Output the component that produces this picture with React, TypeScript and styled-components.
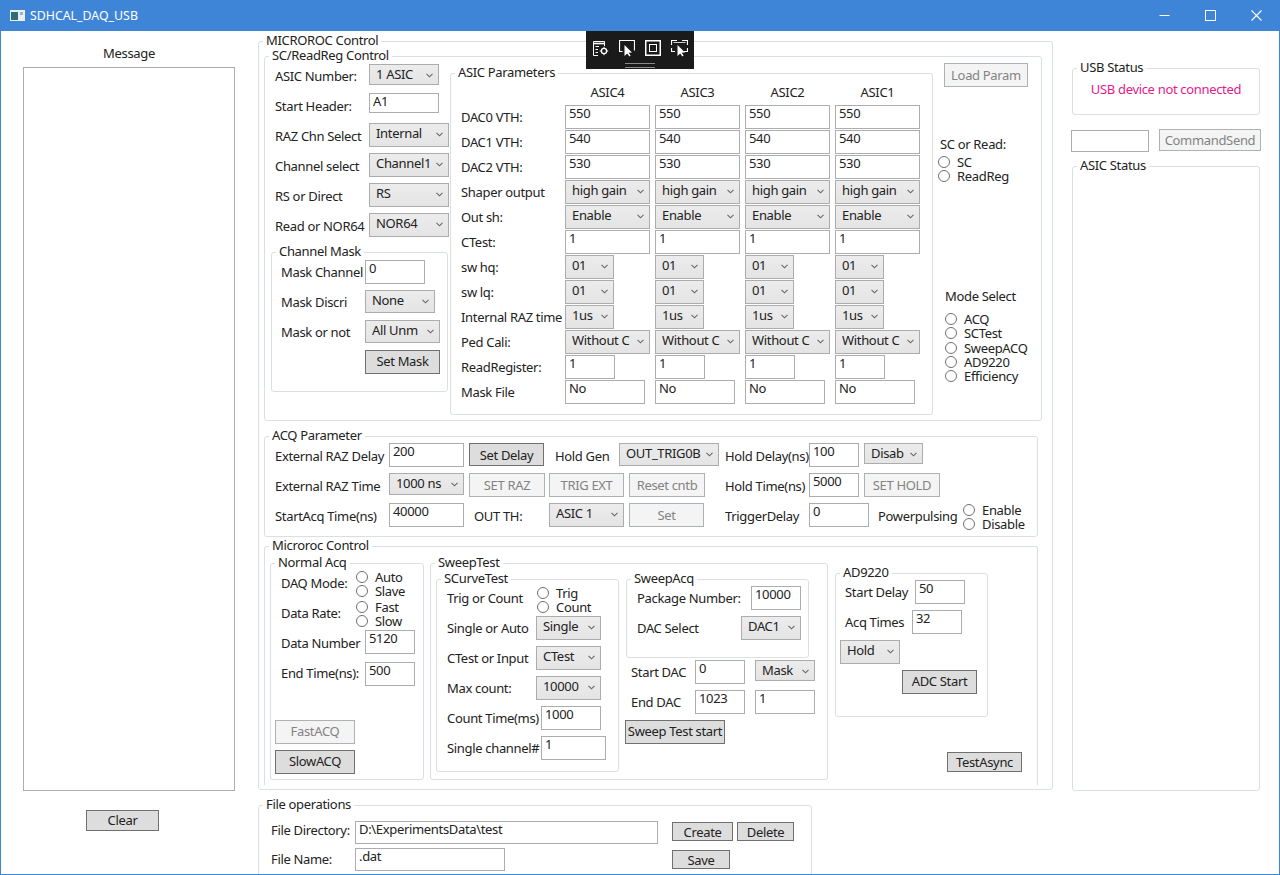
import React from 'react';
import styled, { createGlobalStyle } from 'styled-components';

const GlobalStyle = createGlobalStyle`
  html, body {
    margin: 0;
    padding: 0;
    background: #ffffff;
  }
  body {
    font-family: "Noto Sans", "Open Sans", sans-serif;
    font-size: 13px;
    letter-spacing: -0.33px;
    color: #222222;
  }
`;

const Window = styled.div`
  width: 1280px;
  height: 875px;
  box-sizing: border-box;
  border: 1px solid #3f85d7;
  border-top: 0;
  position: relative;
  overflow: hidden;
  background: #ffffff;
`;

const TitleBar = styled.div`
  height: 31px;
  background: #3f85d7;
  color: #ffffff;
  display: flex;
  align-items: center;
`;

const TitleText = styled.span`
  margin-left: 5px;
  font-size: 12.35px;
  letter-spacing: 0;
  flex: 1;
`;

const WinButton = styled.div`
  width: 46px;
  height: 31px;
  display: flex;
  align-items: center;
  justify-content: center;
`;

const Main = styled.div`
  display: flex;
  height: 843px;
  overflow: hidden;
`;

const LeftPanel = styled.div`
  width: 257px;
  flex: none;
  box-sizing: border-box;
  padding: 13px 0 0 22px;
`;

const MessageTitle = styled.div`
  width: 212px;
  line-height: 18px;
  text-align: center;
  margin-bottom: 5px;
`;

const MessageBox = styled.textarea`
  display: block;
  width: 212px;
  height: 724px;
  box-sizing: border-box;
  border: 1px solid #abadb3;
  resize: none;
  outline: none;
  margin: 0 0 19px;
`;

const CenterPanel = styled.div`
  width: 813px;
  flex: none;
`;

const RightPanel = styled.div`
  flex: 1;
`;

const Group = styled.fieldset`
  --pad: 0px;
  margin: 0;
  padding: 0 0 0 var(--pad);
  min-width: 0;
  box-sizing: border-box;
  border: 1px solid #d9dfe3;
  border-radius: 3px;
`;

const Caption = styled.legend`
  margin-left: calc(4px - var(--pad));
  padding: 0 3px 2px;
  line-height: 14px;
  white-space: nowrap;
`;

const MicrorocGroup = styled(Group)`
  --pad: 5px;
  width: 795px;
  height: 757px;
  margin-top: 2px;
`;

const ScGroup = styled(Group)`
  width: 778px;
  height: 373px;
  margin-top: -1px;
`;

const ScBody = styled.div`
  display: flex;
  margin-top: -1px;
`;

const ScLeft = styled.div`
  width: 185px;
  flex: none;
`;

const ScFields = styled.div`
  padding-left: 10px;
`;

const MaskGroup = styled(Group)`
  --pad: 9px;
  width: 177px;
  height: 148px;
  margin: 1px 0 0 6px;
`;

const ParamsGroup = styled(Group)`
  width: 483px;
  height: 350px;
  flex: none;
  margin-top: 2px;
`;

const ParamsGrid = styled.div`
  display: grid;
  grid-template-columns: 99px repeat(4, 85px);
  grid-auto-rows: 25px;
  grid-template-rows: 24px;
  column-gap: 5px;
  padding-left: 10px;
`;

const ParamsLabelCell = styled.div`
  line-height: 25px;
  margin-right: -5px;
  white-space: nowrap;
`;

const ParamHead = styled.div`
  line-height: 22px;
  text-align: center;
`;

const ScRight = styled.div`
  padding-left: 11px;
`;

const RightCaption = styled.div<{ $mt: number; $ml: number }>`
  line-height: 18px;
  margin: ${(p) => p.$mt}px 0 0 ${(p) => p.$ml}px;
  white-space: nowrap;
`;

const RadioStack = styled.div<{ $ml?: number; $mt?: number; $pitch?: number }>`
  display: grid;
  grid-auto-rows: ${(p) => p.$pitch ?? 14}px;
  margin: ${(p) => p.$mt ?? 0}px 0 0 ${(p) => p.$ml ?? 0}px;
`;

const RadioLine = styled.label`
  display: flex;
  align-items: center;
  gap: 7px;
  line-height: 14px;
  white-space: nowrap;
`;

const RadioDot = styled.input`
  appearance: none;
  width: 12px;
  height: 12px;
  box-sizing: border-box;
  margin: 0;
  background: #ffffff;
  border: 1px solid #707070;
  border-radius: 50%;
  flex: none;
`;

const AcqGroup = styled(Group)`
  --pad: 10px;
  width: 774px;
  height: 109px;
  margin-top: 7px;
`;

const AcqBody = styled.div`
  margin-top: -1px;
`;

const ControlGroup = styled(Group)`
  width: 774px;
  height: 247px;
  margin-top: 1px;
  border-bottom: 0;
  border-radius: 3px 3px 0 0;
`;

const ControlBody = styled.div`
  display: flex;
  align-items: flex-start;
  margin-top: 1px;
`;

const NormalGroup = styled(Group)`
  --pad: 10px;
  width: 154px;
  height: 225px;
  flex: none;
  margin-left: 5px;
`;

const NormalBody = styled.div`
  margin-top: -1px;
`;

const SweepGroup = styled(Group)`
  width: 398px;
  height: 225px;
  flex: none;
  margin-left: 6px;
`;

const SweepBody = styled.div`
  display: flex;
  align-items: flex-start;
`;

const CurveGroup = styled(Group)`
  --pad: 10px;
  width: 183px;
  height: 201px;
  flex: none;
  margin-left: 5px;
`;

const SweepColumn = styled.div`
  margin-left: 7px;
  width: 195px;
`;

const SweepAcqGroup = styled(Group)`
  --pad: 10px;
  width: 183px;
  height: 87px;
  margin-bottom: 2px;
`;

const DacFields = styled.div`
  padding-left: 5px;
`;

const AdColumn = styled.div`
  margin: 10px 0 0 7px;
  width: 187px;
`;

const AdGroup = styled(Group)`
  --pad: 9px;
  width: 153px;
  height: 152px;
`;

const FileGroup = styled(Group)`
  --pad: 12px;
  width: 554px;
  height: 120px;
  margin-top: 7px;
`;

const FileBody = styled.div`
  margin-top: 8px;
`;

const UsbGroup = styled(Group)`
  width: 188px;
  height: 55px;
  margin: 29px 0 0 1px;
`;

const UsbText = styled.div`
  margin-top: 4px;
  line-height: 18px;
  text-align: center;
  color: #e6198b;
  white-space: nowrap;
`;

const CommandRow = styled.div`
  display: flex;
  align-items: flex-start;
  margin-top: 15px;
`;

const AsicStatusGroup = styled(Group)`
  width: 188px;
  height: 633px;
  margin: 6px 0 0 1px;
`;

const Row = styled.div<{ $h?: number; $mt?: number }>`
  display: flex;
  align-items: flex-start;
  height: ${(p) => p.$h ?? 30}px;
  margin-top: ${(p) => p.$mt ?? 0}px;
`;

const RowLabel = styled.label<{ $w: number; $lh?: number; $ml?: number }>`
  flex: none;
  width: ${(p) => p.$w}px;
  margin-left: ${(p) => p.$ml ?? 0}px;
  line-height: ${(p) => p.$lh ?? 26}px;
  white-space: nowrap;
`;

const TextBox = styled.input<{ $w: number; $h?: number; $ml?: number; $mt?: number }>`
  flex: none;
  display: block;
  box-sizing: border-box;
  width: ${(p) => p.$w}px;
  height: ${(p) => p.$h ?? 24}px;
  margin: ${(p) => p.$mt ?? 0}px 0 0 ${(p) => p.$ml ?? 0}px;
  padding: 0 3px ${(p) => (p.$h ?? 24) - 16}px;
  border: 1px solid #abadb3;
  border-radius: 0;
  outline: none;
  background: #ffffff;
  font: inherit;
  letter-spacing: inherit;
  color: #222222;
`;

const ComboBox = styled.div<{ $w: number; $h?: number; $ml?: number; $mt?: number }>`
  flex: none;
  display: flex;
  box-sizing: border-box;
  width: ${(p) => p.$w}px;
  height: ${(p) => p.$h ?? 24}px;
  margin: ${(p) => p.$mt ?? 0}px 0 0 ${(p) => p.$ml ?? 0}px;
  padding-left: 6px;
  border: 1px solid #acacac;
  background: linear-gradient(#ececec, #e4e4e4);
  line-height: 19px;
`;

const ComboText = styled.span`
  flex: 1;
  min-width: 0;
  overflow: hidden;
  white-space: nowrap;
`;

const ComboArrow = styled.svg`
  flex: none;
  width: 7px;
  height: 5px;
  margin: 8px 5px 0 3px;
`;

const Button = styled.button<{ $w: number; $h?: number; $ml?: number; $mt?: number; $lift?: boolean }>`
  flex: none;
  display: block;
  box-sizing: border-box;
  width: ${(p) => p.$w}px;
  height: ${(p) => p.$h ?? 24}px;
  margin: ${(p) => p.$mt ?? 0}px 0 0 ${(p) => p.$ml ?? 0}px;
  padding: 0 0 ${(p) => (p.$lift ? 2 : 0)}px;
  border: 1px solid #707070;
  border-radius: 0;
  background: #dddddd;
  font: inherit;
  letter-spacing: inherit;
  color: #222222;
  white-space: nowrap;
  &:disabled {
    border-color: #adb2b5;
    background: #f4f4f4;
    color: #838383;
  }
`;

const ToolStrip = styled.div`
  position: absolute;
  left: 585px;
  top: 31px;
  width: 108px;
  height: 38px;
  background: #1a1a1a;
  display: flex;
  flex-direction: column;
  align-items: center;
`;

const ToolIcons = styled.div`
  display: flex;
  gap: 10px;
  margin-top: 9px;
  height: 17px;
`;

const ToolHandle = styled.div`
  width: 30px;
  height: 3px;
  margin-top: 6px;
  border-top: 1px solid #8a8a8a;
  border-bottom: 1px solid #8a8a8a;
`;

const Combo: React.FC<{
  text: string;
  w: number;
  h?: number;
  ml?: number;
  mt?: number;
}> = ({ text, w, h, ml, mt }) => (
  <ComboBox $w={w} $h={h} $ml={ml} $mt={mt}>
    <ComboText>{text}</ComboText>
    <ComboArrow viewBox="0 0 7 5">
      <path d="M0.5 0.8 L3.5 3.8 L6.5 0.8" fill="none" stroke="#666666" strokeWidth="1.1" />
    </ComboArrow>
  </ComboBox>
);

const Field: React.FC<{
  value?: string;
  w: number;
  h?: number;
  ml?: number;
  mt?: number;
}> = ({ value = '', w, h, ml, mt }) => (
  <TextBox type="text" readOnly value={value} $w={w} $h={h} $ml={ml} $mt={mt} />
);

const Radios: React.FC<{
  name: string;
  items: string[];
  ml?: number;
  mt?: number;
  pitch?: number;
}> = ({ name, items, ml, mt, pitch }) => (
  <RadioStack $ml={ml} $mt={mt} $pitch={pitch}>
    {items.map((item) => (
      <RadioLine key={item}>
        <RadioDot type="radio" name={name} />
        {item}
      </RadioLine>
    ))}
  </RadioStack>
);

type ParamRow = {
  label: string;
  kind: 'text' | 'combo';
  value: string;
  w: number;
};

const asicNames = ['ASIC4', 'ASIC3', 'ASIC2', 'ASIC1'];

const paramRows: ParamRow[] = [
  { label: 'DAC0 VTH:', kind: 'text', value: '550', w: 85 },
  { label: 'DAC1 VTH:', kind: 'text', value: '540', w: 85 },
  { label: 'DAC2 VTH:', kind: 'text', value: '530', w: 85 },
  { label: 'Shaper output', kind: 'combo', value: 'high gain', w: 85 },
  { label: 'Out sh:', kind: 'combo', value: 'Enable', w: 85 },
  { label: 'CTest:', kind: 'text', value: '1', w: 85 },
  { label: 'sw hq:', kind: 'combo', value: '01', w: 49 },
  { label: 'sw lq:', kind: 'combo', value: '01', w: 49 },
  { label: 'Internal RAZ time', kind: 'combo', value: '1us', w: 49 },
  { label: 'Ped Cali:', kind: 'combo', value: 'Without C', w: 85 },
  { label: 'ReadRegister:', kind: 'text', value: '1', w: 50 },
  { label: 'Mask File', kind: 'text', value: 'No', w: 80 },
];

const TitleIcon = () => (
  <svg width="15" height="11" viewBox="0 0 15 11" style={{ marginLeft: 9 }}>
    <rect width="15" height="11" fill="#e8eef2" />
    <rect x="1" y="2" width="7" height="8" fill="#2f6f73" />
    <rect x="10" y="2" width="3" height="3" fill="#9fb4c0" />
  </svg>
);

const WindowButtons = () => (
  <>
    <WinButton>
      <svg width="11" height="11" viewBox="0 0 11 11">
        <path d="M0.5 5.5 H10.5" stroke="#ffffff" fill="none" />
      </svg>
    </WinButton>
    <WinButton>
      <svg width="11" height="11" viewBox="0 0 11 11">
        <rect x="0.5" y="0.5" width="10" height="10" stroke="#ffffff" fill="none" />
      </svg>
    </WinButton>
    <WinButton>
      <svg width="11" height="11" viewBox="0 0 11 11">
        <path d="M0.5 0.5 L10.5 10.5 M10.5 0.5 L0.5 10.5" stroke="#ffffff" strokeWidth="1.1" fill="none" />
      </svg>
    </WinButton>
  </>
);

const CaptureTools = () => (
  <ToolStrip>
    <ToolIcons>
      <svg width="17" height="17" viewBox="0 0 17 17" fill="none" stroke="#ffffff">
        <path d="M6 15.5 H1.5 V1.5 H12.5 V6" />
        <path d="M1.5 3.5 H12.5" strokeWidth="1.6" />
        <path d="M3.5 6.5 H7 M3.5 9.5 H6 M3.5 12.5 H6" />
        <circle cx="12" cy="11" r="2.6" strokeWidth="1.3" />
        <path d="M12 6.8 V8 M12 14 V15.2 M7.8 11 H9 M15 11 H16.2" />
      </svg>
      <svg width="16" height="17" viewBox="0 0 16 17" fill="none" stroke="#ffffff">
        <path d="M3.5 11.5 H0.5 V0.5 H15.5 V10.5" strokeWidth="1.2" />
        <path d="M5.5 5 L5.5 16 L8.2 13.4 L10.4 16.5 L11.6 15.6 L9.6 12.8 L13 12.4 Z" fill="#ffffff" stroke="none" />
      </svg>
      <svg width="16" height="17" viewBox="0 0 16 17" fill="none" stroke="#ffffff">
        <rect x="0.75" y="0.75" width="14.5" height="14.5" strokeWidth="1.5" />
        <rect x="4.5" y="4.5" width="7" height="7" />
      </svg>
      <svg width="17" height="17" viewBox="0 0 17 17" fill="none" stroke="#ffffff">
        <path d="M0.5 5 V0.5 H6 M11 0.5 H16.5 V5 M16.5 8 V11.5 H13 M4 11.5 H0.5 V8" strokeWidth="1.2" />
        <path d="M2.5 2.5 H14.5" strokeWidth="0.8" />
        <path d="M6.5 5 L6.5 16 L9.2 13.4 L11.4 16.5 L12.6 15.6 L10.6 12.8 L14 12.4 Z" fill="#ffffff" stroke="none" />
      </svg>
    </ToolIcons>
    <ToolHandle />
  </ToolStrip>
);

const ScPanel = () => (
  <ScGroup>
    <Caption>SC/ReadReg Control</Caption>
    <ScBody>
      <ScLeft>
        <ScFields>
          <Row>
            <RowLabel $w={94}>ASIC Number:</RowLabel>
            <Combo text="1 ASIC" w={70} h={21} mt={1} />
          </Row>
          <Row>
            <RowLabel $w={94}>Start Header:</RowLabel>
            <Field value="A1" w={70} h={20} />
          </Row>
          <Row>
            <RowLabel $w={94}>RAZ Chn Select</RowLabel>
            <Combo text="Internal" w={80} />
          </Row>
          <Row>
            <RowLabel $w={94}>Channel select</RowLabel>
            <Combo text="Channel1" w={80} />
          </Row>
          <Row>
            <RowLabel $w={94}>RS or Direct</RowLabel>
            <Combo text="RS" w={80} />
          </Row>
          <Row>
            <RowLabel $w={94}>Read or NOR64</RowLabel>
            <Combo text="NOR64" w={80} />
          </Row>
        </ScFields>
        <MaskGroup>
          <Caption>Channel Mask</Caption>
          <Row>
            <RowLabel $w={84} $lh={25}>Mask Channel</RowLabel>
            <Field value="0" w={60} />
          </Row>
          <Row>
            <RowLabel $w={84} $lh={25}>Mask Discri</RowLabel>
            <Combo text="None" w={70} h={23} />
          </Row>
          <Row>
            <RowLabel $w={84} $lh={25}>Mask or not</RowLabel>
            <Combo text="All Unm" w={75} h={23} />
          </Row>
          <Row>
            <Button type="button" $lift $w={75} $ml={84}>Set Mask</Button>
          </Row>
        </MaskGroup>
      </ScLeft>
      <ParamsGroup>
        <Caption>ASIC Parameters</Caption>
        <ParamsGrid>
          <div />
          {asicNames.map((name) => (
            <ParamHead key={name}>{name}</ParamHead>
          ))}
          {paramRows.map((row) => (
            <React.Fragment key={row.label}>
              <ParamsLabelCell>{row.label}</ParamsLabelCell>
              {asicNames.map((name) =>
                row.kind === 'text' ? (
                  <Field key={name} value={row.value} w={row.w} />
                ) : (
                  <Combo key={name} text={row.value} w={row.w} />
                ),
              )}
            </React.Fragment>
          ))}
        </ParamsGrid>
      </ParamsGroup>
      <ScRight>
        <Button type="button" disabled $w={84}>Load Param</Button>
        <RightCaption $mt={48} $ml={-4}>SC or Read:</RightCaption>
        <Radios name="scRead" items={['SC', 'ReadReg']} ml={-6} mt={2} />
        <RightCaption $mt={104} $ml={1}>Mode Select</RightCaption>
        <Radios
          name="mode"
          items={['ACQ', 'SCTest', 'SweepACQ', 'AD9220', 'Efficiency']}
          ml={1}
          mt={7}
          pitch={14.25}
        />
      </ScRight>
    </ScBody>
  </ScGroup>
);

const AcqPanel = () => (
  <AcqGroup>
    <Caption>ACQ Parameter</Caption>
    <AcqBody>
      <Row>
        <RowLabel $w={114} $lh={27}>External RAZ Delay</RowLabel>
        <Field value="200" w={75} />
        <Button type="button" $w={75} $h={23} $ml={5}>Set Delay</Button>
        <RowLabel $w={64} $lh={27} $ml={11}>Hold Gen</RowLabel>
        <Combo text="OUT_TRIG0B" w={100} h={23} />
        <RowLabel $w={84} $lh={27} $ml={6}>Hold Delay(ns)</RowLabel>
        <Field value="100" w={50} />
        <Combo text="Disab" w={59} h={21} ml={5} />
      </Row>
      <Row>
        <RowLabel $w={114} $lh={27}>External RAZ Time</RowLabel>
        <Combo text="1000 ns" w={75} h={22} />
        <Button type="button" disabled $w={76} $ml={5}>SET RAZ</Button>
        <Button type="button" disabled $w={75} $ml={4}>TRIG EXT</Button>
        <Button type="button" disabled $w={76} $ml={5}>Reset cntb</Button>
        <RowLabel $w={84} $lh={27} $ml={20}>Hold Time(ns)</RowLabel>
        <Field value="5000" w={50} />
        <Button type="button" disabled $w={76} $ml={5}>SET HOLD</Button>
      </Row>
      <Row>
        <RowLabel $w={114} $lh={27}>StartAcq Time(ns)</RowLabel>
        <Field value="40000" w={75} />
        <RowLabel $w={75} $lh={27} $ml={10}>OUT TH:</RowLabel>
        <Combo text="ASIC 1" w={75} />
        <Button type="button" disabled $w={75} $ml={5}>Set</Button>
        <RowLabel $w={84} $lh={27} $ml={21}>TriggerDelay</RowLabel>
        <Field value="0" w={60} />
        <RowLabel $w={85} $lh={27} $ml={9}>Powerpulsing</RowLabel>
        <Radios name="power" items={['Enable', 'Disable']} />
      </Row>
    </AcqBody>
  </AcqGroup>
);

const NormalPanel = () => (
  <NormalGroup>
    <Caption>Normal Acq</Caption>
    <NormalBody>
      <Row>
        <RowLabel $w={75}>DAQ Mode:</RowLabel>
        <Radios name="daqMode" items={['Auto', 'Slave']} />
      </Row>
      <Row>
        <RowLabel $w={75}>Data Rate:</RowLabel>
        <Radios name="dataRate" items={['Fast', 'Slow']} />
      </Row>
      <Row>
        <RowLabel $w={84}>Data Number</RowLabel>
        <Field value="5120" w={50} />
      </Row>
      <Row $h={60}>
        <RowLabel $w={84}>End Time(ns):</RowLabel>
        <Field value="500" w={50} mt={2} />
      </Row>
      <Row>
        <Button type="button" disabled $lift $w={80} $ml={-6}>FastACQ</Button>
      </Row>
      <Row>
        <Button type="button" $lift $w={80} $ml={-6}>SlowACQ</Button>
      </Row>
    </NormalBody>
  </NormalGroup>
);

const SweepPanel = () => (
  <SweepGroup>
    <Caption>SweepTest</Caption>
    <SweepBody>
      <CurveGroup>
        <Caption>SCurveTest</Caption>
        <Row $h={29}>
          <RowLabel $w={90} $lh={23}>Trig or Count</RowLabel>
          <Radios name="trig" items={['Trig', 'Count']} mt={-1} />
        </Row>
        <Row>
          <RowLabel $w={89} $lh={25}>Single or Auto</RowLabel>
          <Combo text="Single" w={65} />
        </Row>
        <Row>
          <RowLabel $w={89} $lh={25}>CTest or Input</RowLabel>
          <Combo text="CTest" w={65} />
        </Row>
        <Row>
          <RowLabel $w={89} $lh={25}>Max count:</RowLabel>
          <Combo text="10000" w={65} />
        </Row>
        <Row>
          <RowLabel $w={94} $lh={25}>Count Time(ms)</RowLabel>
          <Field value="1000" w={60} />
        </Row>
        <Row>
          <RowLabel $w={94} $lh={25}>Single channel#</RowLabel>
          <Field value="1" w={65} />
        </Row>
      </CurveGroup>
      <SweepColumn>
        <SweepAcqGroup>
          <Caption>SweepAcq</Caption>
          <Row $mt={-1}>
            <RowLabel $w={114} $lh={25}>Package Number:</RowLabel>
            <Field value="10000" w={50} />
          </Row>
          <Row>
            <RowLabel $w={104} $lh={25}>DAC Select</RowLabel>
            <Combo text="DAC1" w={60} />
          </Row>
        </SweepAcqGroup>
        <DacFields>
          <Row>
            <RowLabel $w={64} $lh={25}>Start DAC</RowLabel>
            <Field value="0" w={50} />
            <Combo text="Mask" w={60} h={21} ml={10} />
          </Row>
          <Row>
            <RowLabel $w={64} $lh={25}>End DAC</RowLabel>
            <Field value="1023" w={50} />
            <Field value="1" w={60} ml={10} />
          </Row>
          <Button type="button" $lift $w={100} $ml={-6}>Sweep Test start</Button>
        </DacFields>
      </SweepColumn>
    </SweepBody>
  </SweepGroup>
);

const AdPanel = () => (
  <AdColumn>
    <AdGroup>
      <Caption>AD9220</Caption>
      <Row $mt={-1}>
        <RowLabel $w={70} $lh={25}>Start Delay</RowLabel>
        <Field value="50" w={50} />
      </Row>
      <Row>
        <RowLabel $w={67} $lh={25}>Acq Times</RowLabel>
        <Field value="32" w={50} />
      </Row>
      <Row>
        <Combo text="Hold" w={60} ml={-5} />
      </Row>
      <Row>
        <Button type="button" $lift $w={75} $ml={57}>ADC Start</Button>
      </Row>
    </AdGroup>
    <Button type="button" $w={75} $h={20} $ml={112} $mt={35}>TestAsync</Button>
  </AdColumn>
);

export default function App() {
  return (
    <>
      <GlobalStyle />
      <Window>
        <TitleBar>
          <TitleIcon />
          <TitleText>SDHCAL_DAQ_USB</TitleText>
          <WindowButtons />
        </TitleBar>
        <Main>
          <LeftPanel>
            <MessageTitle>Message</MessageTitle>
            <MessageBox readOnly />
            <Button type="button" $lift $w={73} $h={21} $ml={63}>Clear</Button>
          </LeftPanel>
          <CenterPanel>
            <MicrorocGroup>
              <Caption>MICROROC Control</Caption>
              <ScPanel />
              <AcqPanel />
              <ControlGroup>
                <Caption>Microroc Control</Caption>
                <ControlBody>
                  <NormalPanel />
                  <SweepPanel />
                  <AdPanel />
                </ControlBody>
              </ControlGroup>
            </MicrorocGroup>
            <FileGroup>
              <Caption>File operations</Caption>
              <FileBody>
                <Row $h={27}>
                  <RowLabel $w={84} $lh={18}>File Directory:</RowLabel>
                  <Field value="D:\ExperimentsData\test" w={303} h={23} />
                  <Button type="button" $lift $w={61} $h={19} $ml={14} $mt={1}>Create</Button>
                  <Button type="button" $lift $w={57} $h={19} $ml={4} $mt={1}>Delete</Button>
                </Row>
                <Row $h={27}>
                  <RowLabel $w={84} $lh={22}>File Name:</RowLabel>
                  <Field value=".dat" w={150} h={23} />
                  <Button type="button" $lift $w={58} $h={19} $ml={167} $mt={2}>Save</Button>
                </Row>
              </FileBody>
            </FileGroup>
          </CenterPanel>
          <RightPanel>
            <UsbGroup>
              <Caption>USB Status</Caption>
              <UsbText>USB device not connected</UsbText>
            </UsbGroup>
            <CommandRow>
              <Field w={78} h={22} />
              <Button type="button" disabled $w={102} $h={22} $ml={10} $mt={-1}>CommandSend</Button>
            </CommandRow>
            <AsicStatusGroup>
              <Caption>ASIC Status</Caption>
            </AsicStatusGroup>
          </RightPanel>
        </Main>
        <CaptureTools />
      </Window>
    </>
  );
}
